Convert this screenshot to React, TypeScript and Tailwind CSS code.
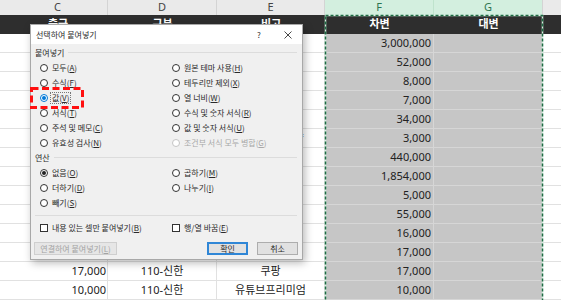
import type { ReactNode } from "react";

type Row = { c: string; d: string; e: string; f: string };

const rows: Row[] = [
  { c: "3,000,000", d: "110-신한", e: "급여 이체", f: "3,000,000" },
  { c: "52,000", d: "110-신한", e: "스마트 스토어", f: "52,000" },
  { c: "8,000", d: "110-신한", e: "통신비 납부일", f: "8,000" },
  { c: "7,000", d: "110-신한", e: "가스비 납부일", f: "7,000" },
  { c: "34,000", d: "110-신한", e: "마트", f: "34,000" },
  { c: "3,000", d: "110-신한", e: "도서 구입 교양", f: "3,000" },
  { c: "440,000", d: "110-신한", e: "카드 대금", f: "440,000" },
  { c: "1,854,000", d: "110-신한", e: "월세", f: "1,854,000" },
  { c: "5,000", d: "110-신한", e: "주차비 정산일", f: "5,000" },
  { c: "55,000", d: "110-신한", e: "식비", f: "55,000" },
  { c: "16,000", d: "110-신한", e: "교통비", f: "16,000" },
  { c: "17,000", d: "110-신한", e: "배달", f: "17,000" },
  { c: "17,000", d: "110-신한", e: "쿠팡", f: "17,000" },
  { c: "10,000", d: "110-신한", e: "유튜브프리미엄", f: "10,000" },
];

function SheetRow({ r }: { r: Row }) {
  return (
    <div className="flex h-[19px] text-[11px] text-[#222]">
      <div className="flex w-[108px] items-center justify-end border-r border-b border-[#e1e1e1] pr-[1px]">
        {r.c}
      </div>
      <div className="flex w-[109px] items-center justify-center border-r border-b border-[#e1e1e1]">
        {r.d}
      </div>
      <div className="flex w-[108px] items-center justify-center border-r border-b border-[#e1e1e1] whitespace-nowrap">
        {r.e}
      </div>
      <div className="flex w-[109px] items-center justify-end border-r border-b border-[#d6d6d6] bg-[#c6c6c6] pr-[2px]">
        {r.f}
      </div>
      <div className="w-[109px] border-r border-b border-[#d6d6d6] bg-[#c6c6c6]" />
      <div className="w-[18px] border-b border-[#e1e1e1]" />
    </div>
  );
}

function GroupLabel({ children }: { children: ReactNode }) {
  return (
    <div className="flex h-[15px] items-center pr-[5px] pl-[4px]">
      <span>{children}</span>
      <div className="ml-[4px] h-px flex-1 bg-[#dcdcdc]" />
    </div>
  );
}

function Radio({
  label,
  k,
  checked,
  blue,
  disabled,
  focus,
}: {
  label: string;
  k: string;
  checked?: boolean;
  blue?: boolean;
  disabled?: boolean;
  focus?: boolean;
}) {
  return (
    <div
      className={`flex h-[15px] items-center gap-[4px] whitespace-nowrap ${
        disabled ? "text-[#a8a8a8]" : ""
      }`}
    >
      <span
        className={`flex h-[8px] w-[8px] shrink-0 items-center justify-center rounded-full border bg-white ${
          disabled
            ? "border-[#c4c4c4]"
            : blue
              ? "border-[#0078d7]"
              : "border-[#333]"
        }`}
      >
        {checked && (
          <span
            className={`h-[4px] w-[4px] rounded-full ${
              blue ? "bg-[#0078d7]" : "bg-[#222]"
            }`}
          />
        )}
      </span>
      <span
        className={
          focus
            ? "-ml-[2px] border border-dotted border-[#777] px-[1px] leading-[10px]"
            : ""
        }
      >
        {label}
        <span className="underline-offset-1">
          (<u>{k}</u>)
        </span>
      </span>
    </div>
  );
}

function Check({ label, k }: { label: string; k: string }) {
  return (
    <div className="flex h-[14px] items-center gap-[4px] whitespace-nowrap">
      <span className="h-[8px] w-[8px] shrink-0 border border-[#333] bg-white" />
      <span>
        {label}(<u>{k}</u>)
      </span>
    </div>
  );
}

export default function App() {
  return (
    <div className="relative h-[300px] w-[561px] overflow-hidden bg-white font-['Noto_Sans','Noto_Sans_CJK_KR',sans-serif]">
      {/* column letters */}
      <div className="flex h-[15px] text-[11px] text-[#444]">
        <div className="flex w-[108px] items-center justify-center border-r border-[#d4d4d4] bg-[#eaeaea] pl-[8px]">
          C
        </div>
        <div className="flex w-[109px] items-center justify-center border-r border-[#d4d4d4] bg-[#eaeaea]">
          D
        </div>
        <div className="flex w-[108px] items-center justify-center border-r border-[#d4d4d4] bg-[#eaeaea]">
          E
        </div>
        <div className="flex w-[109px] items-center justify-center border-r border-[#bfe3cd] bg-[#d3efdf] text-[#2e7550]">
          F
        </div>
        <div className="flex w-[109px] items-center justify-center border-r border-[#d4d4d4] bg-[#d3efdf] text-[#2e7550]">
          G
        </div>
        <div className="w-[18px] bg-[#eaeaea]" />
      </div>

      {/* dark title row */}
      <div className="flex h-[19px] bg-[#2e2e2e] text-[11px] font-bold text-white">
        <div className="flex w-[108px] items-center justify-center pl-[8px]">출금</div>
        <div className="flex w-[109px] items-center justify-center">구분</div>
        <div className="flex w-[108px] items-center justify-center">비고</div>
        <div className="flex w-[109px] items-center justify-center">차변</div>
        <div className="flex w-[109px] items-center justify-center">대변</div>
        <div className="w-[18px]" />
      </div>

      {rows.map((r, i) => (
        <SheetRow key={i} r={r} />
      ))}

      {/* copy marquee */}
      <svg
        className="absolute top-[14px] left-[324px]"
        width="220"
        height="292"
      >
        <rect
          x="1.5"
          y="1.5"
          width="217"
          height="300"
          fill="none"
          stroke="#d8efe1"
          strokeWidth="1.5"
        />
        <rect
          x="1.5"
          y="1.5"
          width="217"
          height="300"
          fill="none"
          stroke="#1e6b43"
          strokeWidth="1.5"
          strokeDasharray="3 2"
        />
      </svg>

      {/* paste special dialog */}
      <div className="absolute top-[24px] left-[30px] flex h-[236px] w-[273px] flex-col border border-[#a8a8a8] bg-[#f0f0f0] font-['Noto_Sans_CJK_KR',sans-serif] text-[8px] text-[#2a2a2a] shadow-[2px_3px_8px_rgba(0,0,0,0.28)]">
        <div className="flex h-[19px] items-center bg-white pr-[4px] pl-[5px]">
          <span className="flex-1">선택하여 붙여넣기</span>
          <span className="w-5 text-center text-[8px]">?</span>
          <span className="ml-[9px] flex w-5 justify-center">
            <svg width="8" height="8" viewBox="0 0 8 8">
              <path d="M0.5 0.5L7.5 7.5M7.5 0.5L0.5 7.5" stroke="#333" strokeWidth="0.9" />
            </svg>
          </span>
        </div>

        <div className="flex flex-1 flex-col pt-[1px] pb-[4px]">
          <GroupLabel>붙여넣기</GroupLabel>
          <div className="grid grid-cols-[132px_1fr] pl-[9px]">
            <Radio label="모두" k="A" />
            <Radio label="원본 테마 사용" k="H" />
            <Radio label="수식" k="F" />
            <Radio label="테두리만 제외" k="X" />
            <Radio label="값" k="V" checked blue focus />
            <Radio label="열 너비" k="W" />
            <Radio label="서식" k="T" />
            <Radio label="수식 및 숫자 서식" k="R" />
            <Radio label="주석 및 메모" k="C" />
            <Radio label="값 및 숫자 서식" k="U" />
            <Radio label="유효성 검사" k="N" />
            <Radio label="조건부 서식 모두 병합" k="G" disabled />
          </div>

          <GroupLabel>연산</GroupLabel>
          <div className="grid grid-cols-[132px_1fr] pl-[9px]">
            <Radio label="없음" k="O" checked />
            <Radio label="곱하기" k="M" />
            <Radio label="더하기" k="D" />
            <Radio label="나누기" k="I" />
            <Radio label="빼기" k="S" />
          </div>

          <div className="mt-[5px] mr-[5px] ml-[4px] h-px bg-[#dcdcdc]" />

          <div className="mt-[5px] grid grid-cols-[132px_1fr] pl-[9px]">
            <Check label="내용 있는 셀만 붙여넣기" k="B" />
            <Check label="행/열 바꿈" k="E" />
          </div>

          <div className="mt-[7px] flex h-[13px] pr-[4px] pl-[3px]">
            <div className="flex w-[83px] items-center justify-center border border-[#cfcfcf] bg-[#e6e6e6] whitespace-nowrap text-[#a3a3a3]">
              연결하여 붙여넣기(<u>L</u>)
            </div>
            <div className="ml-auto flex w-[41px] items-center justify-center border-2 border-[#2f86d6] bg-[#e1e1e1]">
              확인
            </div>
            <div className="ml-[9px] flex w-[41px] items-center justify-center border border-[#adadad] bg-[#e1e1e1]">
              취소
            </div>
          </div>
        </div>
      </div>

      {/* red annotation */}
      <svg className="absolute top-[87px] left-[30px]" width="54" height="22">
        <rect
          x="1.5"
          y="1.5"
          width="51"
          height="19"
          fill="none"
          stroke="#ff1010"
          strokeWidth="3"
          strokeDasharray="7 3.5"
        />
      </svg>
    </div>
  );
}
